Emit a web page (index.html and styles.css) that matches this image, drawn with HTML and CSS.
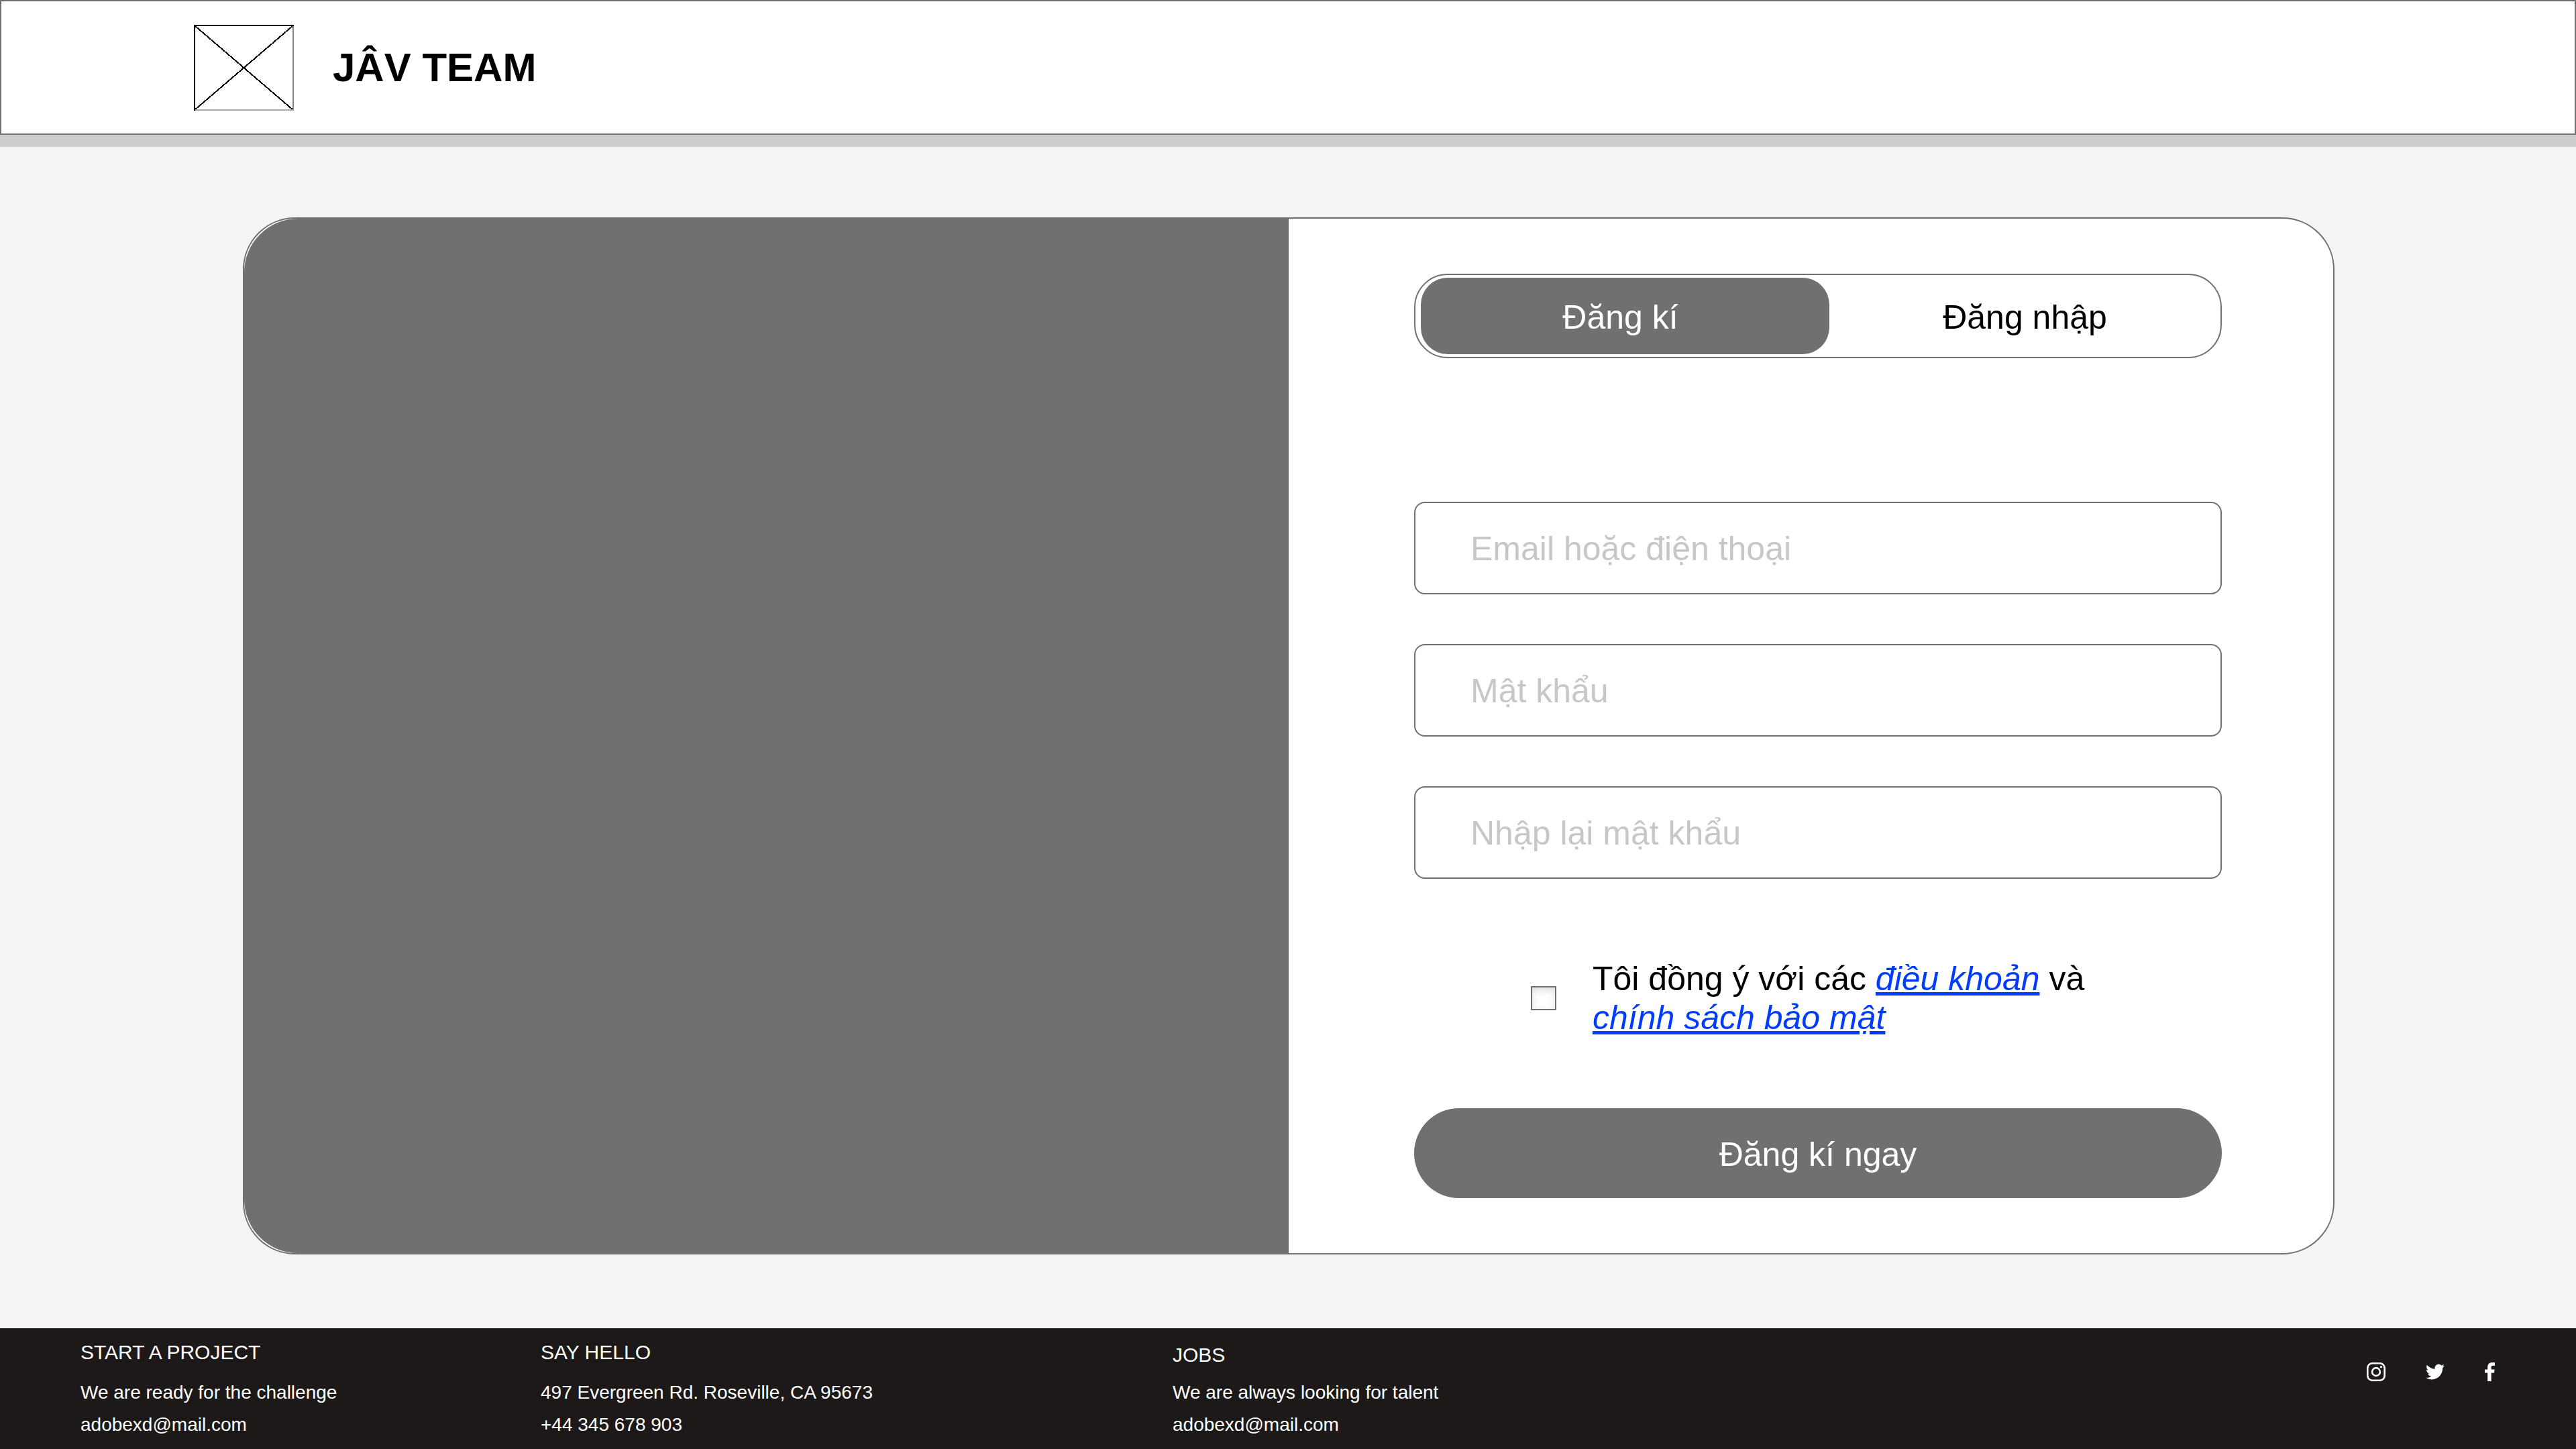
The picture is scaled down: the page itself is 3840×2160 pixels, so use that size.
FILE: index.html
```html
<!DOCTYPE html>
<html lang="vi">
<head>
<meta charset="utf-8">
<meta name="viewport" content="width=device-width, initial-scale=1">
<title>JÂV TEAM</title>
<link rel="stylesheet" href="styles.css">
</head>
<body>
<header class="site-header">
  <svg class="logo" viewBox="0 0 149 128" aria-hidden="true">
    <path d="M1 1 148 127M148 1 1 127" fill="none" stroke="#000" stroke-width="2" shape-rendering="crispEdges"/>
    <path d="M148 1V127" stroke="#888" stroke-width="2"/>
    <path d="M1 127H149" stroke="#aaa" stroke-width="2"/>
    <path d="M1 128V1H149" fill="none" stroke="#000" stroke-width="2"/>
  </svg>
  <h1 class="brand">JÂV TEAM</h1>
</header>

<main class="page">
  <div class="card">
    <div class="card-media"></div>
    <form class="signup">
      <div class="tabs">
        <button class="tab tab-active" type="button">Đăng kí</button>
        <button class="tab" type="button">Đăng nhập</button>
      </div>
      <div class="fields">
        <input class="field" type="text" placeholder="Email hoặc điện thoại" aria-label="Email hoặc điện thoại">
        <input class="field" type="password" placeholder="Mật khẩu" aria-label="Mật khẩu">
        <input class="field" type="password" placeholder="Nhập lại mật khẩu" aria-label="Nhập lại mật khẩu">
      </div>
      <div class="consent">
        <input class="consent-box" type="checkbox" id="agree">
        <label class="consent-text" for="agree">Tôi đồng ý với các <a href="#terms">điều khoản</a> và <br><a href="#privacy">chính sách bảo mật</a></label>
      </div>
      <button class="submit" type="submit">Đăng kí ngay</button>
    </form>
  </div>
</main>

<footer class="site-footer">
  <section class="footer-col">
    <h2>START A PROJECT</h2>
    <p>We are ready for the challenge</p>
    <p><a href="mailto:adobexd@mail.com">adobexd@mail.com</a></p>
  </section>
  <section class="footer-col">
    <h2>SAY HELLO</h2>
    <p>497 Evergreen Rd. Roseville, CA 95673</p>
    <p>+44 345 678 903</p>
  </section>
  <section class="footer-col footer-jobs">
    <h2>JOBS</h2>
    <p>We are always looking for talent</p>
    <p><a href="mailto:adobexd@mail.com">adobexd@mail.com</a></p>
  </section>
  <nav class="social" aria-label="Social">
    <a href="#instagram" aria-label="Instagram">
      <svg width="28" height="28" viewBox="0 0 28 28" fill="none" stroke="#fff" stroke-width="2.6">
        <rect x="1.3" y="1.3" width="25.4" height="25.4" rx="7"/>
        <circle cx="14" cy="14" r="5.9"/>
        <circle cx="21.5" cy="6.6" r="1.7" fill="#fff" stroke="none"/>
      </svg>
    </a>
    <a href="#twitter" aria-label="Twitter">
      <svg width="28" height="28" viewBox="0 0 24 24" fill="#fff">
        <path d="M23.953 4.57a10 10 0 01-2.825.775 4.958 4.958 0 002.163-2.723c-.951.555-2.005.959-3.127 1.184a4.92 4.92 0 00-8.384 4.482C7.69 8.095 4.067 6.13 1.64 3.162a4.822 4.822 0 00-.666 2.475c0 1.71.87 3.213 2.188 4.096a4.904 4.904 0 01-2.228-.616v.06a4.923 4.923 0 003.946 4.827 4.996 4.996 0 01-2.212.085 4.936 4.936 0 004.604 3.417 9.867 9.867 0 01-6.102 2.105c-.39 0-.779-.023-1.17-.067a13.995 13.995 0 007.557 2.209c9.053 0 13.998-7.496 13.998-13.985 0-.21 0-.42-.015-.63A9.935 9.935 0 0024 4.59z"/>
      </svg>
    </a>
    <a href="#facebook" aria-label="Facebook">
      <svg width="15" height="28" viewBox="0 0 15 28" fill="#fff">
        <path d="M4.200 28V15.500H0V10.500H4.200V7C4.200 2.600 6.800 0 10.900 0H15V4.700H12C10.500 4.700 9.700 5.400 9.700 7V10.500H14.700L14 15.500H9.700V28Z"/>
      </svg>
    </a>
  </nav>
</footer>
</body>
</html>
```
FILE: styles.css
```css
* {
  box-sizing: border-box;
}

body {
  margin: 0;
  min-height: 100vh;
  display: flex;
  flex-direction: column;
  background: #f5f3f4;
  color: #000;
  font-family: "Liberation Sans", Arial, sans-serif;
  font-size: 50px;
  line-height: 58px;
}

h1,
h2,
p {
  margin: 0;
}

button,
input {
  font: inherit;
}

/* Header */
.site-header {
  display: flex;
  align-items: center;
  gap: 58px;
  padding: 35px 287px 34px;
  background: #fff;
  border: 2px solid #707070;
  box-shadow: 0 18px 0 #cdcbcc;
}

.logo {
  width: 149px;
  height: 128px;
}

.brand {
  font-size: 60px;
  line-height: 68px;
  font-weight: bold;
}

/* Sign-up card */
.page {
  flex: 1;
  padding: 123px 360px 110px 362px;
}

.card {
  display: grid;
  grid-template-columns: 1fr 1fr;
  background: #fff;
  border: 2px solid #707070;
  border-radius: 78px;
}

.card-media {
  background: #707070;
  border-radius: 80px 0 0 80px;
}

.signup {
  display: flex;
  flex-direction: column;
  padding: 82px 166px 82px 187px;
}

.tabs {
  display: grid;
  grid-template-columns: 609fr 583fr;
  padding: 4px 0 4px 8px;
  border: 2px solid #707070;
  border-radius: 50px;
}

.tab {
  padding: 30px 0 26px;
  border: 0;
  border-radius: 40px;
  background: none;
  color: #000;
}

.tab-active {
  padding-right: 14px;
  background: #707070;
  color: #fff;
}

.fields {
  display: flex;
  flex-direction: column;
  gap: 74px;
  margin-top: 214px;
}

.field {
  width: 100%;
  height: 138px;
  padding: 2px 82px 0;
  background: #fff;
  border: 2px solid #707070;
  border-radius: 16px;
  color: #000;
}

.field::placeholder {
  color: #c7c7c7;
  opacity: 1;
}

.consent {
  display: flex;
  align-items: center;
  gap: 54px;
  margin-top: 120px;
  padding-left: 174px;
}

.consent-box {
  appearance: none;
  flex: none;
  width: 38px;
  height: 36px;
  margin: 0;
  background: #fff;
  border: 2px solid #707070;
  box-shadow: inset 0 4px 12px #ddd;
}

.consent-text a {
  color: #003cff;
  font-style: italic;
}

.submit {
  margin-top: 106px;
  padding: 40px 0 36px;
  border: 0;
  border-radius: 68px;
  background: #707070;
  color: #fff;
}

/* Footer */
.site-footer {
  display: flex;
  padding: 16px 121px 12px 120px;
  background: #1d1918;
  color: #fff;
  font-size: 28px;
  line-height: 48px;
}

.footer-col {
  flex: 0 0 686px;
}

.footer-col + .footer-col {
  flex-basis: 942px;
}

.footer-col h2 {
  margin-bottom: 16px;
  font-size: 30px;
  line-height: 40px;
  font-weight: normal;
}

.footer-col.footer-jobs {
  flex: 1;
}

.footer-col.footer-jobs h2 {
  padding-top: 4px;
  margin-bottom: 12px;
}

.footer-col a {
  color: inherit;
  text-decoration: none;
}

.social {
  display: flex;
  gap: 60px;
  padding-top: 35px;
}

.social svg {
  display: block;
}
```
